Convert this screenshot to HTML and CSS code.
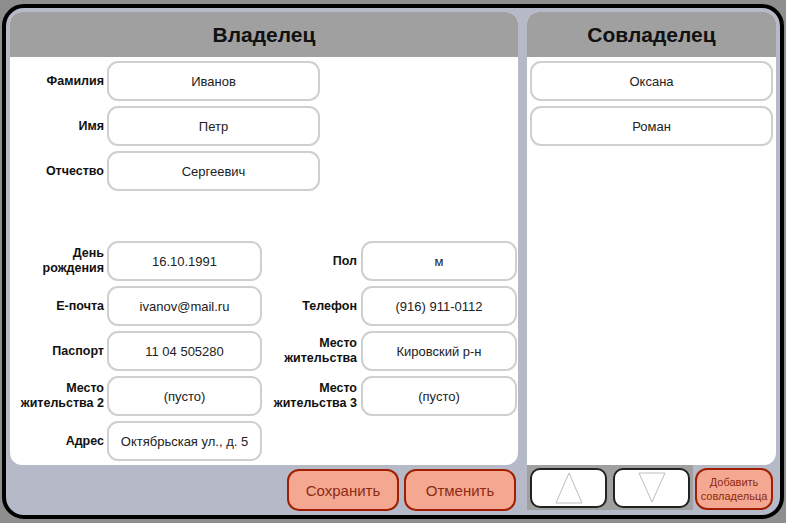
FILE: index.html
```html
<!DOCTYPE html>
<html lang="ru">
<head>
  <meta charset="UTF-8" />
  <title>Владелец</title>
  <link rel="stylesheet" href="styles.css">
</head>
<body>
  <div class="window">
    <div class="owner-col">
      <div class="panel owner">
        <div class="panel-head">Владелец</div>
        <div class="name-grid">
          <label>Фамилия</label><div class="field">Иванов</div>
          <label>Имя</label><div class="field">Петр</div>
          <label>Отчество</label><div class="field">Сергеевич</div>
        </div>
        <div class="info-grid">
          <label>День<br>рождения</label><div class="field">16.10.1991</div>
          <label>Пол</label><div class="field">м</div>

          <label>E-почта</label><div class="field">ivanov@mail.ru</div>
          <label>Телефон</label><div class="field">(916) 911-0112</div>

          <label>Паспорт</label><div class="field">11 04 505280</div>
          <label>Место<br>жительства</label><div class="field">Кировский р-н</div>

          <label>Место<br>жительства 2</label><div class="field">(пусто)</div>
          <label>Место<br>жительства 3</label><div class="field">(пусто)</div>

          <label>Адрес</label><div class="field">Октябрьская ул., д. 5</div>
        </div>
      </div>
      <div class="actions">
        <button class="btn">Сохранить</button>
        <button class="btn">Отменить</button>
      </div>
    </div>

    <div class="co-col">
      <div class="panel co">
        <div class="panel-head">Совладелец</div>
        <div class="co-list">
          <div class="field">Оксана</div>
          <div class="field">Роман</div>
        </div>
      </div>
      <div class="co-footer">
        <div class="arrows">
          <button class="arrow">
            <svg width="28" height="32" viewBox="0 0 28 32"><polygon points="14,1 1,31 27,31" fill="none" stroke="#bdbdbd" stroke-width="1"/></svg>
          </button>
          <button class="arrow">
            <svg width="28" height="32" viewBox="0 0 28 32"><polygon points="1,1 27,1 14,30" fill="none" stroke="#bdbdbd" stroke-width="1"/></svg>
          </button>
        </div>
        <button class="btn small">Добавить<br>совладельца</button>
      </div>
    </div>
  </div>
</body>
</html>
```

FILE: styles.css
```css
body {
  margin: 0;
  background: #8e8e8e;
  font-family: "Liberation Sans", Arial, sans-serif;
  color: #222;
}

.window {
  margin: 4px 0 0 2px;
  width: 782px;
  height: 515px;
  box-sizing: border-box;
  border: 4px solid #000;
  border-radius: 22px;
  background: #b5b9c8;
  padding: 4px 4px 0 4px;
  display: flex;
  gap: 9px;
}

.owner-col {
  width: 508px;
  display: flex;
  flex-direction: column;
}

.co-col {
  width: 249px;
  display: flex;
  flex-direction: column;
}

.panel {
  height: 453px;
  background: #fff;
  border-radius: 12px;
  overflow: hidden;
  box-sizing: border-box;
}

.co {
  border-radius: 12px 12px 12px 0;
}

.panel-head {
  height: 45px;
  background: #a0a0a0;
  font-size: 21px;
  font-weight: bold;
  color: #111;
  display: flex;
  align-items: center;
  justify-content: center;
}

.field {
  height: 40px;
  box-sizing: border-box;
  border: 2px solid #cfcfcf;
  border-radius: 11px;
  display: flex;
  align-items: center;
  justify-content: center;
  font-size: 13px;
  color: #222;
}

label {
  font-size: 12.5px;
  font-weight: bold;
  color: #111;
  text-align: right;
  line-height: 15px;
  align-self: center;
}

.name-grid {
  display: grid;
  grid-template-columns: 94px 213px;
  column-gap: 3px;
  row-gap: 5px;
  padding-top: 4px;
}

.info-grid {
  display: grid;
  grid-template-columns: 94px 155px 92px 157px;
  column-gap: 3px;
  row-gap: 5px;
  margin-top: 50px;
}

.info-grid .field:nth-of-type(2n) {
  margin-left: 1px;
}

.actions {
  display: flex;
  justify-content: flex-end;
  gap: 5px;
  padding: 4px 2px 0 0;
}

.btn {
  width: 112px;
  height: 42px;
  background: #f5a891;
  border: 2px solid #a11f00;
  border-radius: 12px;
  color: #8c2a12;
  font-family: "Liberation Sans", Arial, sans-serif;
  font-size: 15px;
  padding: 0;
}

.co-list {
  display: flex;
  flex-direction: column;
  gap: 5px;
  padding: 4px 3px 0 3px;
}

.co-footer {
  display: flex;
  align-items: flex-start;
}

.arrows {
  width: 166px;
  height: 45px;
  background: #a0a0a0;
  display: flex;
  gap: 6px;
  padding: 3px 0 0 3px;
  box-sizing: border-box;
}

.arrow {
  width: 77px;
  height: 40px;
  background: #fff;
  border: 2px solid #222;
  border-radius: 10px;
  padding: 0;
  display: flex;
  align-items: flex-end;
  justify-content: center;
}

.arrow svg {
  display: block;
  margin-bottom: 2px;
}

.btn.small {
  width: 78px;
  height: 42px;
  margin: 3px 0 0 2px;
  font-size: 11px;
  line-height: 14px;
}
```
